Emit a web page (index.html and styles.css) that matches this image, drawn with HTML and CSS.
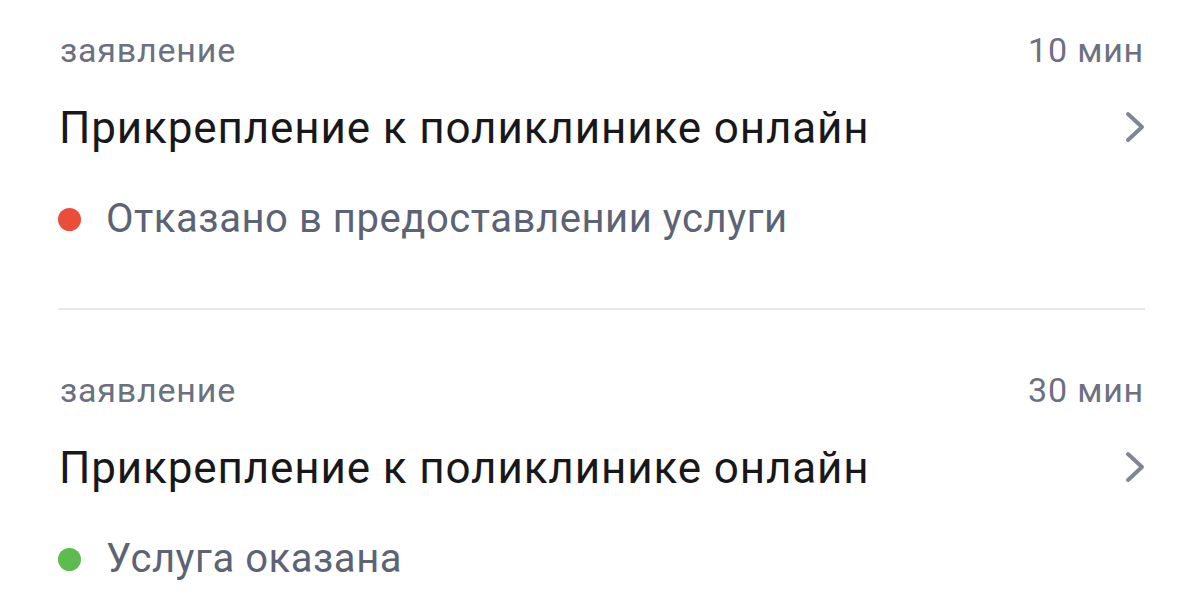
FILE: index.html
```html
<!DOCTYPE html>
<html lang="ru">
<head>
<meta charset="utf-8">
<link rel="stylesheet" href="styles.css">
</head>
<body>
<div class="list">
  <div class="item">
    <div class="meta"><span class="kind">заявление</span><span class="time">10 мин</span></div>
    <div class="title-row"><span class="title">Прикрепление к поликлинике онлайн</span>
      <svg class="chev" width="20" height="32" viewBox="0 0 20 32"><polyline points="3,3 17,16 3,29" fill="none" stroke="#808693" stroke-width="4" stroke-linecap="round" stroke-linejoin="round"/></svg>
    </div>
    <div class="status"><span class="dot red"></span><span class="status-text">Отказано в предоставлении услуги</span></div>
  </div>
  <div class="item">
    <div class="meta"><span class="kind">заявление</span><span class="time">30 мин</span></div>
    <div class="title-row"><span class="title">Прикрепление к поликлинике онлайн</span>
      <svg class="chev" width="20" height="32" viewBox="0 0 20 32"><polyline points="3,3 17,16 3,29" fill="none" stroke="#808693" stroke-width="4" stroke-linecap="round" stroke-linejoin="round"/></svg>
    </div>
    <div class="status"><span class="dot green"></span><span class="status-text">Услуга оказана</span></div>
  </div>
</div>
</body>
</html>
```

FILE: styles.css
```css
html, body {
  margin: 0;
  padding: 0;
  background: #ffffff;
}
body {
  font-family: Roboto, "Liberation Sans", sans-serif;
  overflow: hidden;
}
.list {
  padding: 0 57px 0 58px;
}
.item {
  padding: 60px 0 64px;
  border-bottom: 2px solid #e9e9eb;
}
.item:first-child {
  padding-top: 30px;
}
.meta {
  display: flex;
  justify-content: space-between;
  height: 40px;
  line-height: 40px;
  font-size: 34px;
  letter-spacing: 0.8px;
  color: #6c7181;
}
.kind {
  padding-left: 2px;
}
.time {
  padding-right: 1px;
}
.title-row {
  margin-top: 33px;
  display: flex;
  align-items: center;
  justify-content: space-between;
  height: 50px;
}
.title {
  font-size: 44px;
  line-height: 50px;
  letter-spacing: 0.87px;
  color: #18181a;
  padding-left: 1px;
}
.chev {
  display: block;
  margin-top: -2px;
}
.status {
  margin-top: 41px;
  display: flex;
  align-items: center;
  height: 50px;
}
.dot {
  width: 23px;
  height: 23px;
  border-radius: 50%;
  margin-right: 25px;
  flex: none;
}
.dot.red { background: #ec4d3b; }
.dot.green { background: #5dbb4f; }
.status-text {
  font-size: 40px;
  line-height: 50px;
  letter-spacing: 0.55px;
  color: #5b6375;
}
```
